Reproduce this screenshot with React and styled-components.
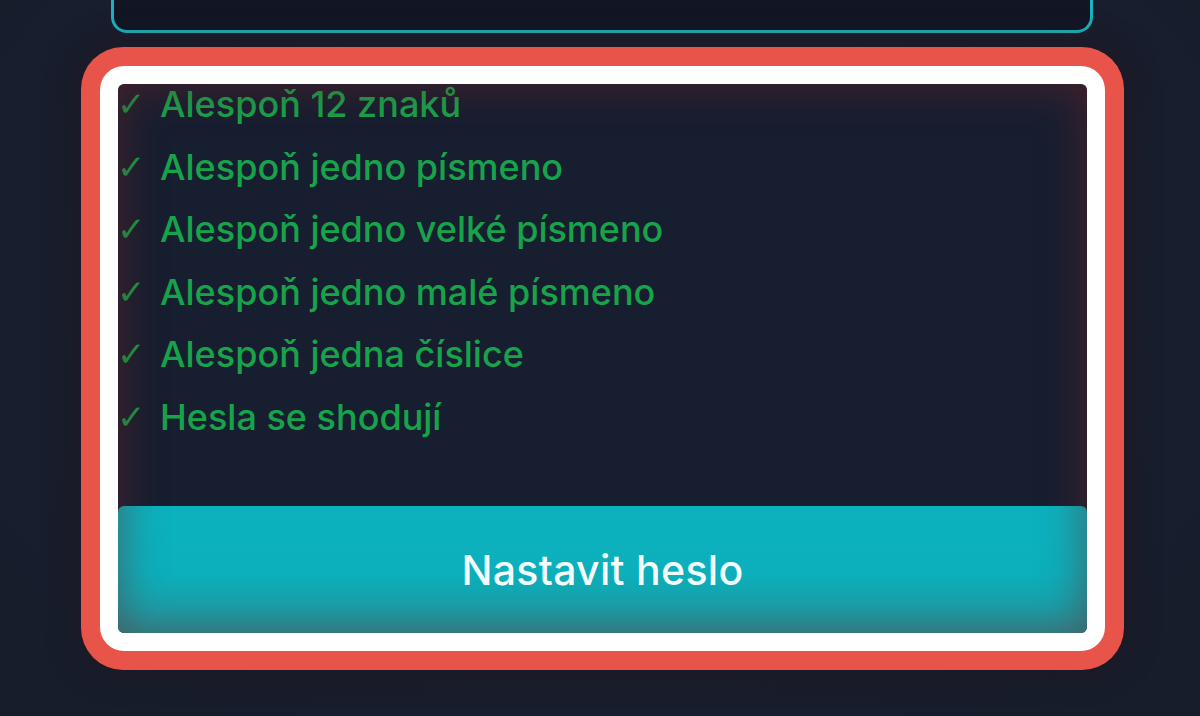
import React from 'react'
import styled, { createGlobalStyle } from 'styled-components'

const GlobalStyle = createGlobalStyle`
  html, body {
    margin: 0;
    padding: 0;
    background: #181e2d;
    overflow: hidden;
  }
  body {
    font-family: Inter, "Noto Sans", "DejaVu Sans", sans-serif;
  }
`

const Page = styled.div`
  width: 1200px;
  height: 716px;
  background: radial-gradient(ellipse at 50% 40%, #1a1f2e 0%, #181e2d 60%, #161d2b 100%);
  padding-left: 81px;
  box-sizing: border-box;
`

const Column = styled.div`
  display: flex;
  flex-direction: column;
  width: 1043px;
`

const InputTail = styled.div`
  height: 30px;
  margin: 0 31px 14px 30px;
  border: 3px solid #1cb3be;
  border-top: none;
  border-radius: 0 0 16px 16px;
  background: #121624;
`

const FocusRing = styled.div`
  padding: ${p => p.$width}px;
  border-radius: ${p => p.$radius}px;
  background: ${p => p.$color};
  box-shadow: ${p => p.$glow || 'none'};
`

const Card = styled.section`
  position: relative;
  display: flex;
  flex-direction: column;
  height: 549px;
  border-radius: 6px;
  background: #171e30;
  overflow: hidden;

  &::after {
    content: '';
    position: absolute;
    inset: 0;
    border-radius: 6px;
    pointer-events: none;
    box-shadow: inset 0 0 40px 4px rgba(110, 38, 40, 0.5);
  }
`

const Checklist = styled.ul`
  flex: 1;
  list-style: none;
  margin: 0;
  padding: 1px 0 0;
  display: flex;
  flex-direction: column;
  gap: 24.6px;
`

const Item = styled.li`
  display: flex;
  align-items: center;
  height: 38px;
  color: ${p => (p.$ok ? '#17a34a' : '#ef4444')};
  font-size: 36px;
  font-weight: 450;
`

const Check = styled.span`
  width: 43px;
  flex: none;
  margin-left: -1px;
  font-family: "DejaVu Sans", sans-serif;
  font-size: 34px;
  line-height: 1;
  color: #169c46;
`

const SubmitButton = styled.button`
  flex: none;
  height: 127px;
  border: none;
  border-radius: 6px 6px 0 0;
  background: linear-gradient(180deg, #0bb2be 0%, #0bb0bc 50%, #1d9ba4 100%);
  color: #f4fbfc;
  font-family: Inter, "Noto Sans", sans-serif;
  font-size: 41px;
  font-weight: 500;
  letter-spacing: 0.3px;
  padding: 0;
  cursor: pointer;
`

const rules = [
  'Alespoň 12 znaků',
  'Alespoň jedno písmeno',
  'Alespoň jedno velké písmeno',
  'Alespoň jedno malé písmeno',
  'Alespoň jedna číslice',
  'Hesla se shodují',
]

export default function App() {
  return (
    <Page>
      <GlobalStyle />
      <Column>
        <InputTail />
        <FocusRing $width={19} $radius={42} $color="#e8534a" $glow="0 0 30px 6px rgba(40, 20, 28, 0.45)">
          <FocusRing $width={18} $radius={24} $color="#ffffff">
            <Card>
              <Checklist>
                {rules.map(rule => (
                  <Item key={rule} $ok>
                    <Check>✓</Check>
                    {rule}
                  </Item>
                ))}
              </Checklist>
              <SubmitButton type="submit">Nastavit heslo</SubmitButton>
            </Card>
          </FocusRing>
        </FocusRing>
      </Column>
    </Page>
  )
}
